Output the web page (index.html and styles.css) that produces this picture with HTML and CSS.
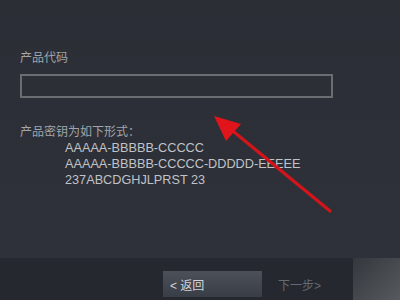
FILE: index.html
```html
<!DOCTYPE html>
<html lang="zh-CN">
<head>
  <meta charset="UTF-8" />
  <title>产品代码</title>
  <link rel="stylesheet" href="styles.css">
</head>
<body>
  <div class="dialog">
    <div class="content">
      <label class="field-label" for="code">产品代码</label>
      <input type="text" id="code" class="code-input" />
      <p class="hint">产品密钥为如下形式：</p>
      <div class="formats">
        <div>AAAAA-BBBBB-CCCCC</div>
        <div>AAAAA-BBBBB-CCCCC-DDDDD-EEEEE</div>
        <div>237ABCDGHJLPRST 23</div>
      </div>
    </div>
    <div class="footer">
      <div class="buttons">
        <button class="btn btn-back">&lt; 返回</button>
        <button class="btn btn-next">下一步&gt;</button>
      </div>
      <div class="side"></div>
    </div>
  </div>

  <!-- annotation arrow -->
  <svg class="arrow" width="400" height="300" viewBox="0 0 400 300">
    <line x1="330" y1="211" x2="228" y2="127" stroke="#d3151b" stroke-width="3.2" stroke-linecap="round" />
    <polygon points="214,116 241,124 226,141" fill="#e0141a" />
  </svg>
</body>
</html>
```

FILE: styles.css
```css
body {
  margin: 0;
  width: 400px;
  height: 300px;
  overflow: hidden;
  background-color: #2c2f36;
  font-family: "Liberation Sans", "Noto Sans CJK SC", sans-serif;
}

.dialog {
  display: flex;
  flex-direction: column;
  height: 300px;
}

.content {
  flex: 1;
  padding: 51px 0 0 20px;
  background: linear-gradient(#2b2e35, #2e3139);
}

.field-label {
  display: block;
  font-size: 12px;
  line-height: 14px;
  color: #a2a5aa;
}

.code-input {
  display: block;
  box-sizing: border-box;
  width: 313px;
  height: 24px;
  margin-top: 9px;
  background: #2c2f36;
  border: 2px solid #6a6d72;
  outline: none;
}

.hint {
  margin: 27px 0 0;
  font-size: 12px;
  line-height: 14px;
  color: #a2a5aa;
}

.formats {
  padding-left: 45px;
  margin-top: 1px;
  font-size: 12.7px;
  line-height: 16px;
  color: #c0c3c8;
}

.footer {
  display: flex;
  height: 42px;
}

.buttons {
  width: 353px;
  display: flex;
  align-items: flex-start;
  padding: 13px 0 0 163px;
  box-sizing: border-box;
  background-color: #25282e;
}

.btn {
  border: none;
  font-family: "Liberation Sans", "Noto Sans CJK SC", sans-serif;
  font-size: 12px;
  padding: 0;
  height: 26px;
  text-align: left;
}

.btn-back {
  width: 99px;
  padding-left: 7px;
  color: #d2d4d8;
  background: linear-gradient(#4c5058, #393d45);
}

.btn-next {
  width: 70px;
  padding-left: 16px;
  color: #656a72;
  background: transparent;
}

.side {
  flex: 1;
  background: linear-gradient(135deg, #34373d, #56595d);
}

.arrow {
  position: absolute;
  left: 0;
  top: 0;
}
```
